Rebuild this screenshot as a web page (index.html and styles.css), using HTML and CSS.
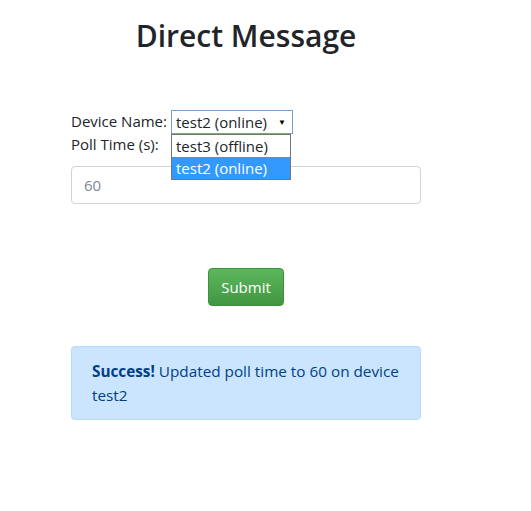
FILE: index.html
```html
<!DOCTYPE html>
<html>
<head>
<meta charset="utf-8">
<link rel="stylesheet" href="styles.css">
</head>
<body>
<div class="container">
  <h2 class="title">Direct Message</h2>
  <form class="form">
    <div class="line">
      <span class="label">Device Name:</span>
      <span class="select">
        <span class="select-value">test2 (online)</span>
        <span class="arrow">&#9660;</span>
        <span class="options">
          <span class="option">test3 (offline)</span>
          <span class="option active">test2 (online)</span>
        </span>
      </span>
    </div>
    <div class="line">
      <span class="label">Poll Time (s):</span>
    </div>
    <div class="input">60</div>
    <div class="actions">
      <button type="button" class="btn">Submit</button>
    </div>
  </form>
  <div class="alert"><strong>Success!</strong> Updated poll time to 60 on device test2</div>
</div>
</body>
</html>
```
FILE: styles.css
```css
html, body {
  margin: 0;
  padding: 0;
  background: #fff;
}
body {
  font-family: "Open Sans", "Noto Sans", sans-serif;
  font-size: 15px;
  color: #212529;
}
.container {
  width: 350px;
  margin-left: 71px;
}
.title {
  margin: 0;
  padding-top: 16px;
  text-align: center;
  font-size: 30px;
  font-weight: 600;
  line-height: 40px;
  color: #212529;
}
.form {
  margin-top: 54px;
}
.line {
  display: flex;
  align-items: center;
  height: 23px;
}
.label {
  line-height: 23px;
}
.select {
  position: relative;
  margin-left: 4px;
  height: 22px;
  width: 116px;
  border: 1px solid #7a9cc6;
  display: flex;
  align-items: center;
  padding-left: 4px;
  box-sizing: content-box;
}
.select-value {
  flex: 1;
  line-height: 22px;
}
.arrow {
  font-size: 8px;
  margin-right: 6px;
  color: #000;
}
.options {
  position: absolute;
  left: -1px;
  top: 23px;
  width: 118px;
  border: 1px solid #767676;
  background: #fff;
  display: flex;
  flex-direction: column;
  z-index: 2;
}
.option {
  padding-left: 4px;
  height: 22px;
  line-height: 22px;
}
.option.active {
  background: #3399ff;
  color: #fff;
}
.input {
  margin-top: 10px;
  height: 36px;
  border: 1px solid #ced4da;
  border-radius: 4px;
  padding: 0 12px;
  line-height: 36px;
  color: #808890;
}
.actions {
  display: flex;
  justify-content: center;
  margin-top: 64px;
}
.btn {
  font-family: inherit;
  font-size: 15px;
  color: #fff;
  width: 76px;
  height: 38px;
  border: 1px solid #3e8f3e;
  border-radius: 4px;
  background: linear-gradient(#5cb85c, #419641);
  padding: 0;
}
.alert {
  margin-top: 40px;
  background: #cce5ff;
  border: 1px solid #b8daff;
  border-radius: 4px;
  color: #004085;
  padding: 12px 20px;
  line-height: 24px;
  font-size: 15.3px;
}
.alert strong {
  font-weight: 700;
}
```
